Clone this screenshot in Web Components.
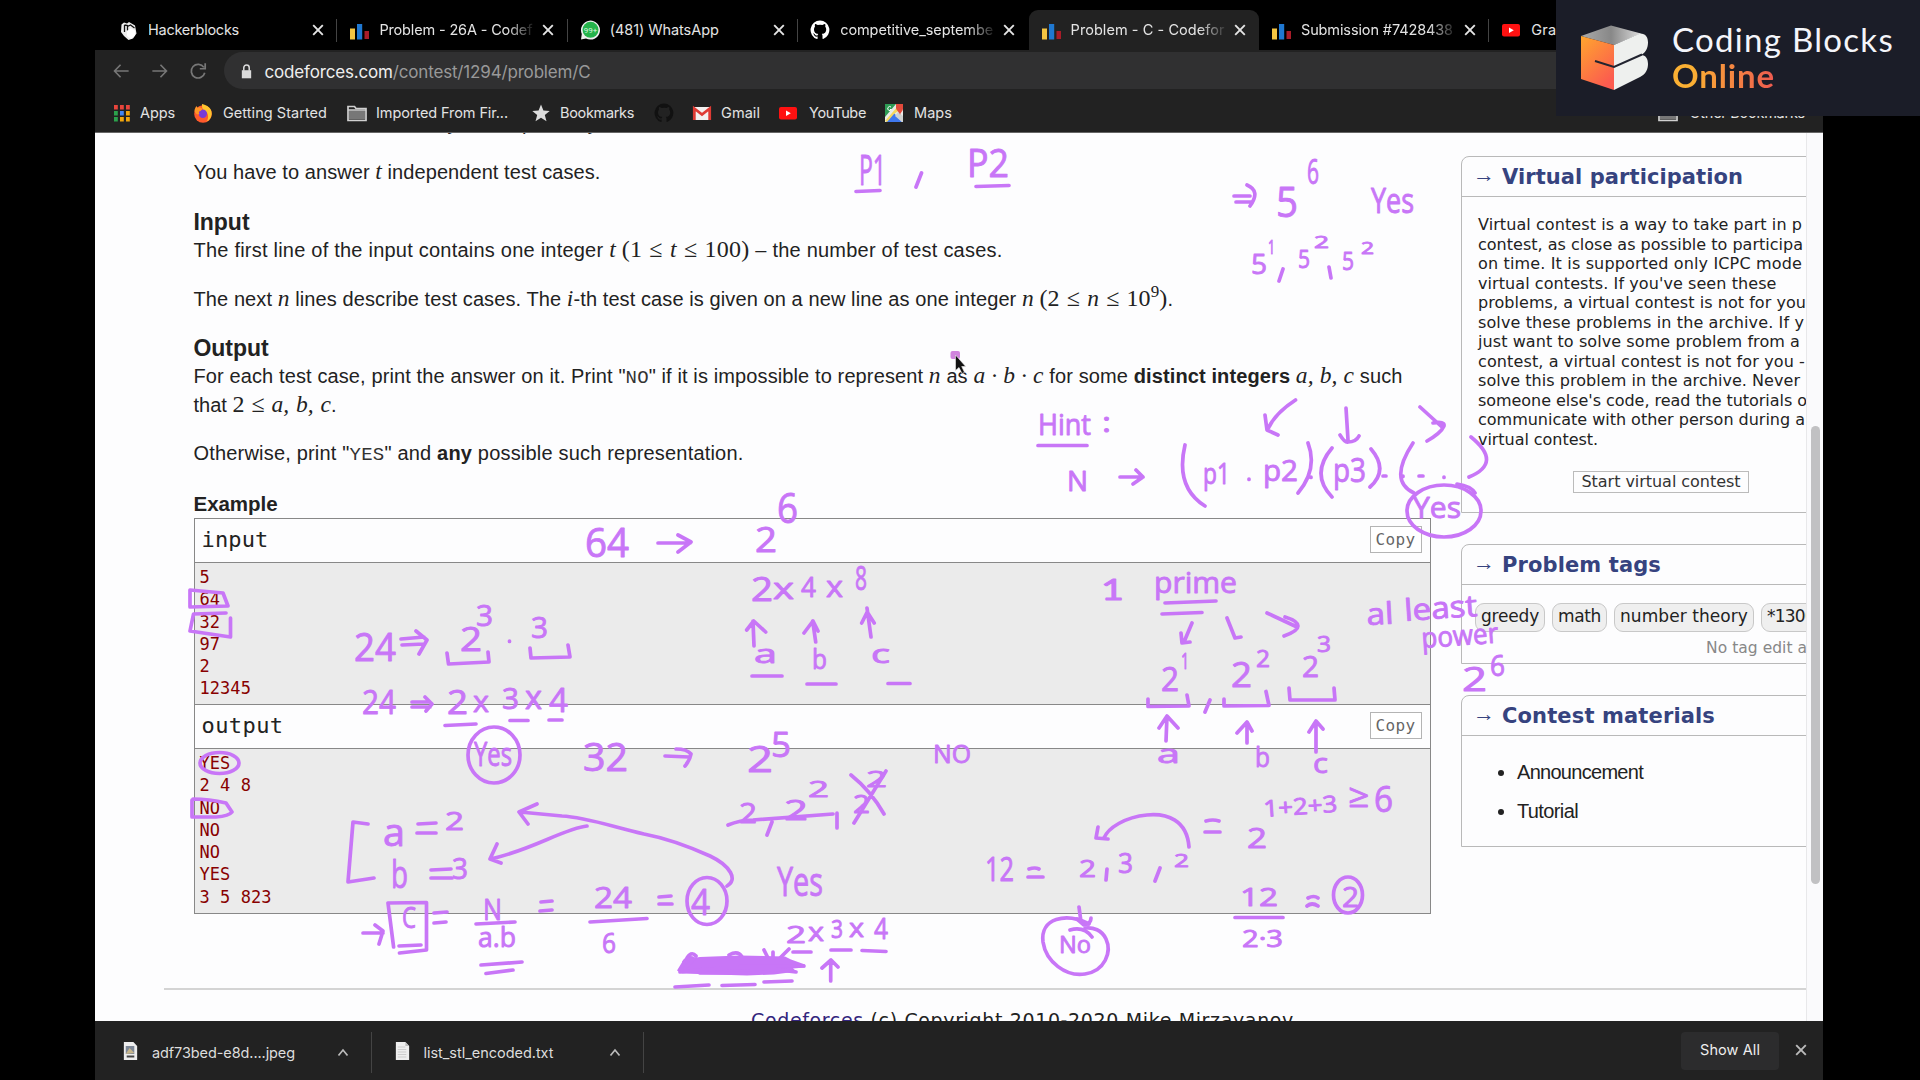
<!DOCTYPE html>
<html lang="en">
<head>
<meta charset="utf-8">
<title>Problem - C - Codeforces</title>
<style>
html,body{margin:0;background:#000;overflow:hidden}
body{width:1920px;height:1080px;font-family:"Liberation Sans",sans-serif}
</style>
</head>
<body>
<desktop-view></desktop-view>
<script>
const make=(name,css,html,after)=>customElements.define(name,class extends HTMLElement{
  constructor(){super();this.attachShadow({mode:'open'});}
  connectedCallback(){
    if(this.ready)return;this.ready=true;
    this.shadowRoot.innerHTML='<style>*{box-sizing:border-box}'+css+'</style>'+(typeof html==='function'?html(this):html);
    if(after)after(this);
  }
});

const bars='<path fill="#f4c542" d="M1 8.500h5v11H1z"/><path fill="#1f78d1" d="M8 4h5.200v15.500H8z"/><path fill="#a81c28" d="M15.500 11h4.500v8h-4.500z"/>';
const cat='<path d="M10 .5a9.500 9.500 0 0 0-3 18.500c.5.1.6-.2.6-.5v-2c-2.600.6-3.200-1-3.200-1-.5-1.200-1.100-1.500-1.100-1.500-.8-.6.1-.6.1-.6 1 .1 1.500 1 1.500 1 .8 1.400 2.200 1 2.800.8.1-.6.3-1 .6-1.300-2.200-.2-4.300-1-4.300-4.700 0-1 .4-1.900 1-2.500-.1-.3-.4-1.300.1-2.600 0 0 .8-.2 2.600 1a9 9 0 0 1 4.800 0c1.800-1.200 2.600-1 2.600-1 .5 1.300.2 2.300.1 2.600.6.6 1 1.500 1 2.500 0 3.700-2.200 4.500-4.400 4.700.4.3.7.9.7 1.800v2.700c0 .3.2.6.7.5A9.500 9.500 0 0 0 10 .5z" ';
const tube='<rect x="1" y="4" width="18" height="12.500" rx="2" fill="#f11"/><path d="M8 7.500v5.500l4.800-2.750z" fill="#fff"/>';
const folder='<path d="M1 3.500h6.500l1.500 2h10v12H1z" fill="none" stroke="#d0d0d0" stroke-width="1.700"/><path d="M2 7.500h16v9H2z" fill="#777"/><path d="M1 7h18" stroke="#d0d0d0" stroke-width="1.500"/>';
const icons={
 hack:'<path d="M2.500 4.500L5 2.500l3 1L10 2l6 3.500 1.500 8L14 18.500 9.500 20 5 16l-3-4z" fill="#eee"/><path d="M5.500 5v7M5.500 5l3 .5 0 5M8.500 6.500l3-1.500 4 3" stroke="#111" stroke-width="1.300" fill="none"/><path d="M8 11l4-2.500 4 2v5l-4 3.500-4-3z" fill="#fff"/>',
 cf:bars, github:cat+'fill="#fff"/>', githubdark:cat+'fill="#111"/>', yt:tube, folder,
 whatsapp:'<path d="M1 19.500L1.800 14A9.500 9.500 0 1 1 6 18.500z" fill="#eee"/><circle cx="10.500" cy="9.800" r="8" fill="#25b34b"/><text x="10.500" y="13" font-size="8" font-family="Roboto" text-anchor="middle" fill="#d9f7df">99+</text>',
 apps:[0,1,2].map(r=>[0,1,2].map(c=>`<rect x="${2+c*6}" y="${2+r*6}" width="3.800" height="4.500" fill="${[['#e8453c','#e8453c','#e8453c'],['#2ba24c','#4285f4','#f2a60c'],['#2ba24c','#f2a60c','#f2a60c']][r][c]}"/>`).join('')).join(''),
 firefox:'<circle cx="10" cy="11" r="8.800" fill="#ff5a2c"/><path d="M9 1c5 1 10 4 9.700 10-.5 4-2 6-5 7.500 2-3 2-8-1-10-3-1-4-4-3.700-7.500z" fill="#ffc42e"/><circle cx="9.800" cy="10.800" r="4.200" fill="#7a3bd6"/><path d="M1.500 8c0-2 1-4 2-5l1 2c2-1 4 0 5 1l-2 2c-2 0-2 2-1 3-2 1-4 0-5-3z" fill="#ff9526"/>',
 star:'<path d="M10 1.500l2.400 6 6.300.4-4.900 4.100 1.700 6.300-5.500-3.500-5.500 3.500 1.700-6.300-4.900-4.100 6.300-.4z" fill="#dcdcdc"/>',
 gmail:'<rect x="1" y="4" width="18" height="13" rx="1" fill="#f3f0ef"/><path d="M2.300 17V5.500l7.700 6 7.700-6V17" fill="none" stroke="#df3b34" stroke-width="2.800"/>',
 maps:'<rect x="1" y="1" width="18" height="18" fill="#e9ebe8"/><path d="M1 1h11L1 14z" fill="#2d9b54"/><path d="M2 19L10 10l8 9z" fill="#3f78ee"/><path d="M1 18L14 3l3 3L10 11l-7 8z" fill="#f6d85c"/><path d="M11 13l7 6h1v-6l-5-4z" fill="#cfd2d0"/><path d="M12 1h7v5c0 2-3 4-3 6 0-2-4-5-4-7z" fill="#e24a3b"/><path d="M7 4a2 2 0 1 0 .5 2.500H6" stroke="#fff" fill="none"/>',
 back:'<path d="M18.500 10H3M9.500 3L2.800 10l6.700 7" fill="none" stroke="#777" stroke-width="1.800"/>',
 fwd:'<path d="M1.500 10H17M10.500 3l6.700 7-6.700 7" fill="none" stroke="#777" stroke-width="1.800"/>',
 reload:'<path d="M16.500 6A7.600 7.600 0 1 0 17.500 12M18 1.500v6h-6" fill="none" stroke="#777" stroke-width="1.900"/>',
 lock:'<path d="M4.500 8.500h11v9.500h-11z" fill="#dadada"/><path d="M6.800 9V5.500a3.200 3.200 0 0 1 6.400 0V9" fill="none" stroke="#dadada" stroke-width="1.800"/>',
 close:'<path d="M5.200 5.200l9.600 9.600M14.800 5.200l-9.600 9.600" stroke="currentColor" stroke-width="1.900"/>',
 caret:'<path d="M5.500 12.500L10 7l4.500 5.500" fill="none" stroke="#bbb" stroke-width="1.700"/>',
 jpeg:'<path d="M3 1h10l4 4v14H3z" fill="#eee"/><rect x="5" y="5" width="9" height="8" fill="#7d8796"/><path d="M5 13l4-6 5 5z" fill="#c7b68c"/><path d="M6 15.500h8" stroke="#444" stroke-width="2"/>',
 txt:'<path d="M3 1h10l4 4v14H3z" fill="#eee"/><path d="M5 6h8M5 8.500h9M5 11h9M5 13.500h9M5 16h9" stroke="#ccc"/><path d="M13 1v4h4" fill="#bbb"/>'
};
make('ui-icon',':host{display:block;flex:none;width:20px;height:20px}svg{display:block;width:100%;height:100%}',
 e=>`<svg viewBox="0 0 20 20" preserveAspectRatio="none">${icons[e.getAttribute('name')]}</svg>`);

make('browser-tab',`:host{display:flex;flex:none;width:230.4px;height:40px;align-items:center;padding:0 8px 0 12px;position:relative;color:#e4e4e4;border-radius:9px 9px 0 0}
 :host([active]){background:#222}
 :host([line])::after{content:"";position:absolute;right:0;top:9px;height:23px;width:1px;background:#444}
 .t{flex:none;width:155px;margin-left:10px;overflow:hidden;white-space:nowrap;position:relative;top:-1px}
 :host([fade]) .t{-webkit-mask:linear-gradient(90deg,#000 128px,transparent 157px)}
 .x{margin-left:4px;width:20px;height:20px}`,
 e=>`<ui-icon name="${e.getAttribute('icon')}"></ui-icon><div class="t"><slot></slot></div><ui-icon class="x" name="close"></ui-icon>`);

make('book-mark',':host{display:flex;flex:none;align-items:center;color:#e2e2e2}ui-icon{margin-right:var(--g,10px)}',
 e=>`<ui-icon name="${e.getAttribute('icon')}"></ui-icon><slot></slot>`);

make('brand-card',`:host{position:absolute;left:1556px;top:0;width:364px;height:116px;background:#1b1d28;display:flex;padding:25px 0 0 24px;color:#f4f5fa;font:33px/36px Lato,sans-serif;z-index:3}
 svg{flex:none;width:69px;height:66px}.w{margin:-4px 0 0 23px;display:flex;flex-direction:column}
 b{font-weight:700;background:linear-gradient(90deg,#fbb033 0,#fbb033 20px,#ee5a50 103px);-webkit-background-clip:text;color:transparent;width:110px}`,
 `<svg viewBox="0 0 69 66"><defs><linearGradient id="o" x1="0" y1="0" x2=".6" y2="1"><stop offset="0" stop-color="#ffa62e"/><stop offset="1" stop-color="#fb5b4f"/></linearGradient><linearGradient id="g"><stop offset="0" stop-color="#aaa"/><stop offset=".5" stop-color="#888"/><stop offset="1" stop-color="#ddd"/></linearGradient></defs>
 <path d="M1 11L31 .5l30 8L34 20z" fill="url(#g)"/><path d="M1 11l33 9v45L1 54z" fill="url(#o)"/><path d="M34 20L60 8.500c6 0 8 4 8 9s-2 10-7 12.500c5 0 7 4 7 9s-2 10-8 13L34 65z" fill="#eef0ee"/><path d="M15 36l19 6 28-12.500" fill="none" stroke="#222430" stroke-width="2"/></svg>
 <div class="w"><fit-text w="222">Coding Blocks</fit-text><b><fit-text w="103">Online</fit-text></b></div>`);

make('chrome-top',`:host{display:block;flex:none;height:133px;font:14.500px Inter,sans-serif}
 .tabs{height:50px;padding:10px 0 0 12px;display:flex;overflow:hidden}
 .bar{height:39px;background:#222;display:flex;align-items:center;padding-left:17px}
 .bar>ui-icon{width:18px;height:18px;margin:3px 20.500px 0 0}
 .url{flex:1;height:37px;margin-top:2px;background:#303031;border-radius:19px 0 0 19px;display:flex;align-items:center;padding:2px 0 0 14px;color:#999;font-size:17px}
 .url ui-icon{width:17px;height:17px;margin-right:9.500px}.url i{font-style:normal;color:#eee}
 .marks{height:44px;background:#222;border-bottom:1px solid #666;display:flex;align-items:center;padding:4px 18px 0 17px}
 .marks book-mark:last-child{margin:20px 0 0 auto}`,
 `<div class="tabs">
 <browser-tab icon="hack" line><fit-text w="91" style="margin-left:-1px">Hackerblocks</fit-text></browser-tab>
 <browser-tab icon="cf" line fade><fit-text w="153">Problem - 26A - Codef</fit-text></browser-tab>
 <browser-tab icon="whatsapp" line><fit-text w="109">(481) WhatsApp</fit-text></browser-tab>
 <browser-tab icon="github" fade><fit-text w="153">competitive_septembe</fit-text></browser-tab>
 <browser-tab icon="cf" active fade><fit-text w="154">Problem - C - Codefor</fit-text></browser-tab>
 <browser-tab icon="cf" line fade><fit-text w="152">Submission #7428438</fit-text></browser-tab>
 <browser-tab icon="yt"><fit-text w="25">Gra</fit-text></browser-tab></div>
 <div class="bar"><ui-icon name="back"></ui-icon><ui-icon name="fwd"></ui-icon><ui-icon name="reload" style="margin-right:17px"></ui-icon>
 <div class="url"><ui-icon name="lock"></ui-icon><fit-text w="326"><i>codeforces.com</i>/contest/1294/problem/C</fit-text></div></div>
 <div class="marks">
 <book-mark icon="apps" style="--g:8px"><fit-text w="35">Apps</fit-text></book-mark>
 <book-mark icon="firefox" style="margin-left:18px"><fit-text w="104">Getting Started</fit-text></book-mark>
 <book-mark icon="folder" style="margin-left:20px;--g:9px"><fit-text w="132">Imported From Fir...</fit-text></book-mark>
 <book-mark icon="star" style="margin-left:23px;--g:9px"><fit-text w="74">Bookmarks</fit-text></book-mark>
 <book-mark icon="githubdark" style="margin-left:20px;--g:18px"></book-mark>
 <book-mark icon="gmail" style="--g:9px"><fit-text w="39">Gmail</fit-text></book-mark>
 <book-mark icon="yt" style="margin-left:18px;--g:11px"><fit-text w="57">YouTube</fit-text></book-mark>
 <book-mark icon="maps" style="margin-left:18px;--g:10px"><fit-text w="38">Maps</fit-text></book-mark>
 <book-mark icon="folder" style="--g:12px;margin-top:0"><fit-text w="115.500">Other Bookmarks</fit-text></book-mark></div>`);

make('sample-block',`:host{display:block;border:solid #888;border-width:1px 1px 0 1px;font-family:"DejaVu Sans Mono",monospace}
 :host([last]){border-bottom-width:1px}
 header{height:43px;display:flex;justify-content:space-between;align-items:center;padding:0 8px;font-size:22px;color:#222}
 header span.b{border:1px solid #b4b4b4;background:#fff;width:52px;height:27px;font-size:16px;line-height:25px;text-align:center;color:#666;margin-bottom:2px}
 header>:first-child{margin:-1px 0 0 -1px}
 pre{margin:0;border-top:1px solid #888;background:#ebebeb;color:#880000;font:17px/22.250px "DejaVu Sans Mono",monospace;height:var(--h);padding:3px 0 0 5px;letter-spacing:.05px}`,
 e=>`<header><fit-text w="${e.getAttribute('tw')}">${e.getAttribute('label')}</fit-text><span class="b"><fit-text w="40">Copy</fit-text></span></header><pre>${e.textContent}</pre>`);

make('problem-text',`:host{display:block;flex:none;width:1237px;margin-left:98.500px;font:20px/28px "Liberation Sans",sans-serif;color:#222}
 p,h3,h4{margin:0;height:28px;white-space:nowrap}h3{font-size:23px}h4{font-size:20.500px}
 m{font:italic 23.500px/0 "Liberation Serif",serif}n{font:24px/0 "Liberation Serif",serif;word-spacing:1px}sup{font-size:17px;line-height:0}
 tt{font:19px/0 "Liberation Mono",monospace;color:#333}`,
 `<p style="margin-top:-24px"><fit-text w="408">If there are several answers, you can print any.</fit-text></p>
 <p style="margin-top:21px"><fit-text w="407">You have to answer <m>t</m> independent test cases.</fit-text></p>
 <h3 style="margin-top:22px"><fit-text w="56">Input</fit-text></h3>
 <p style="margin-top:0"><fit-text w="809">The first line of the input contains one integer <m>t</m> <n>(1 ≤ <m>t</m> ≤ 100)</n> – the number of test cases.</fit-text></p>
 <p style="margin-top:21px"><fit-text w="979.500">The next <m>n</m> lines describe test cases. The <m>i</m>-th test case is given on a new line as one integer <m>n</m> <n>(2 ≤ <m>n</m> ≤ 10<sup>9</sup>)</n>.</fit-text></p>
 <h3 style="margin-top:21px"><fit-text w="75">Output</fit-text></h3>
 <p style="margin-top:0"><fit-text w="1209">For each test case, print the answer on it. Print "<tt>NO</tt>" if it is impossible to represent <m>n</m> as <m>a · b · c</m> for some <b>distinct integers</b> <m>a, b, c</m> such</fit-text></p>
 <p style="margin-top:.5px"><fit-text w="143">that <n>2 ≤ <m>a, b, c</m></n>.</fit-text></p>
 <p style="margin-top:20px"><fit-text w="550">Otherwise, print "<tt>YES</tt>" and <b>any</b> possible such representation.</fit-text></p>
 <h4 style="margin-top:23px"><fit-text w="84">Example</fit-text></h4>
 <sample-block label="input" tw="67" style="--h:142px;margin-top:.5px">5
64
32
97
2
12345</sample-block><sample-block last label="output" tw="82" style="--h:165px">YES
2 4 8
NO
NO
NO
YES
3 5 823</sample-block>`);

make('side-panel',`:host{display:block;width:400px;border:1px solid #b9b9b9;border-radius:8px 8px 0 0;margin-bottom:31px;font-family:"DejaVu Sans",sans-serif}
 header{height:40px;border-bottom:1px solid #b9b9b9;display:flex;align-items:center;padding-left:11px;color:#36437f;font-size:21px;font-weight:700}
 i{font:22px/20px "Liberation Serif",serif;width:29px;margin-top:-3px}`,
 e=>`<header><i>→</i><fit-text w="${e.getAttribute('w')}">${e.getAttribute('label')}</fit-text></header><slot></slot>`);

const vp=[[324,"Virtual contest is a way to take part in p"],[325,"contest, as close as possible to participa"],[324,"on time. It is supported only ICPC mode"],[298.5,"virtual contests. If you've seen these"],[328,"problems, a virtual contest is not for you"],[326,"solve these problems in the archive. If y"],[322,"just want to solve some problem from a"],[327,"contest, a virtual contest is not for you -"],[322,"solve this problem in the archive. Never"],[329,"someone else's code, read the tutorials o"],[327,"communicate with other person during a"],[120,"virtual contest."]];
make('side-bar',`:host{display:block;flex:none;width:400px;margin:23px 0 0 30.500px}
 .vp{padding:18px 0 0 16px;font-size:16px;line-height:19.500px;color:#222}.vp div{height:19.500px}
 .btn{width:176px;height:22px;margin:22px 0 0 111px;border:1px solid #bbb;font-size:16px;line-height:20px;text-align:center;color:#333}
 .tags{display:flex;gap:7px;padding:18px 0 0 13px}.tags span{flex:none;height:29px;border:1.500px solid #c8c8c8;border-radius:9px;background:#efefef;padding:0 5px;font-size:17px;line-height:25px;color:#222}
 .no{margin:6px 0 0 244px;font-size:15.500px;line-height:20px;color:#888;white-space:nowrap}
 ul{margin:0;padding:17px 0 0 55px;font:20px/39px "Liberation Sans",sans-serif;color:#222}`,
 `<side-panel w="241" label="Virtual participation" style="height:357px"><div class="vp">${vp.map(l=>`<div><fit-text w="${l[0]}">${l[1]}</fit-text></div>`).join('')}</div><div class="btn"><fit-text w="159">Start virtual contest</fit-text></div></side-panel>
 <side-panel w="159" label="Problem tags" style="height:120px"><div class="tags"><span><fit-text w="58">greedy</fit-text></span><span><fit-text w="43">math</fit-text></span><span><fit-text w="128">number theory</fit-text></span><span><fit-text w="48">*1300</fit-text></span></div><div class="no"><fit-text w="144">No tag edit access</fit-text></div></side-panel>
 <side-panel w="213" label="Contest materials" style="height:152px"><ul><li><fit-text w="126">Announcement</fit-text></li><li><fit-text w="61">Tutorial</fit-text></li></ul></side-panel>`);

make('web-page',`:host{display:flex;flex:none;height:888px;background:#fdfdfe;overflow:hidden}
 .v{width:1711px;overflow:hidden;flex:none}.m{display:flex;height:855px}
 footer{margin-left:69px;border-top:2px solid #d4d4d4;padding:18px 0 0 587px;font:19px/24px "DejaVu Sans",sans-serif;color:#222}u{text-decoration:none;color:#33257d}
 .s{flex:1;border-left:1px solid #e8e8ea;background:#fafafc;padding:293px 3.500px 0 4px}.s div{height:458px;border-radius:5px;background:#c1c1c3}`,
 `<div class="v"><div class="m"><problem-text></problem-text><side-bar></side-bar></div><footer><fit-text w="543"><u>Codeforces</u> (c) Copyright 2010-2020 Mike Mirzayanov</fit-text></footer></div><div class="s"><div></div></div>`);

make('download-item',`:host{display:flex;flex:none;width:272.500px;height:41px;align-items:center;border-right:1px solid #444;padding:0 18px 0 22px}
 .f{width:19px;height:20px;margin:-4px 12px 0 0}.c{margin-left:auto}`,
 e=>`<ui-icon class="f" name="${e.getAttribute('icon')}"></ui-icon><slot></slot><ui-icon class="c" name="caret"></ui-icon>`);
make('download-bar',`:host{display:flex;flex:none;height:59px;background:#222;padding:11px 12px 0 4px;color:#ddd;font:14.500px Inter,sans-serif}
 download-item+download-item{padding-left:21px}
 .a{margin-left:auto;width:98px;height:38px;background:#2c2c2d;border-radius:4px;text-align:center;line-height:35px;color:#eee}
 .x{margin:8px 0 0 12px;color:#bbb}`,
 `<download-item icon="jpeg"><fit-text w="143">adf73bed-e8d....jpeg</fit-text></download-item><download-item icon="txt"><fit-text w="130">list_stl_encoded.txt</fit-text></download-item>
 <div class="a"><fit-text w="60">Show All</fit-text></div><ui-icon class="x" name="close"></ui-icon>`);

/* Pen annotations: [text, x, width, baseline, size, rotation] */
const notes=[["P1",859,27,185,42],["P2",967,42,177,38],["5",1276,22,217,42],["6",1307,12,184,34],["Yes",1371,43,213,34],
["5",1251,16,274,28],["1",1268,7,254,20],["5",1298,12,268,25],["2",1314,15,248,16],["5",1342,12,270,26],["2",1361,13,254,16],
["Hint",1038,53,435,30],[":",1102,9,432,28],["N",1067,21,491,28],["p1",1203,27,484,30],["p2",1263,35,481,30],["p3",1333,33,482,32],
["Yes",1413,48,518,30],["6",777,21,523,42],["64",585,44,557,40],["2",755,22,552,35],["2",751,22,601,32],["x",773,21,599,30],["4",801,15,597,28],["x",826,17,597,30],["8",855,12,590,33],
["a",754,23,663,26],["b",812,15,669,28],["c",871,19,663,26],
["24",354,42,661,38],["2",460,22,651,32],["3",476,17,626,30],["3",531,17,638,30],["24",362,34,714,33],["2",447,21,714,32],["x",473,16,712,30],["3",502,17,709,29],["x",525,17,709,32],["4",549,19,712,32],
["Yes",474,38,766,32],["32",583,45,771,38],["2",747,26,772,36],["5",771,20,757,35],["NO",933,38,763,26],
["2",739,18,823,28],["2",784,24,820,28],["2",808,21,797,22],["2",853,17,813,26],["2",866,21,787,21],["Yes",777,46,896,40],
["a",383,22,846,38],["2",445,19,830,26],["b",391,17,888,38],["3",452,16,879,29],["C",402,14,928,29],["N",483,19,920,30],["a.b",478,38,947,27],
["24",594,38,908,29],["6",602,14,953,28],["4",691,19,915,36],["2",786,20,943,23],["x",808,16,941,26],["3",831,12,938,25],["x",849,15,937,26],["4",874,14,939,30],
["prime",1154,83,593,29],["2",1161,18,691,32],["1",1181,8,669,21],["2",1231,21,687,34],["2",1256,14,667,23],["2",1302,17,677,29],["3",1317,14,652,21],
["a",1157,23,763,26],["b",1255,15,767,28],["c",1313,15,773,27],["al",1367,27,625,30,-3],["least",1405,73,621,30,-4],["power",1422,77,648,28,-4],["2",1462,25,691,32],["6",1490,15,676,29],
["2",1247,20,848,28],["1+2+3",1264,74,817,23,-4],["≥",1348,21,807,32],["6",1374,19,812,37],
["12",985,29,881,32],["2",1079,17,877,23],["3",1118,15,873,27],["2",1174,15,867,18],["12",1240,38,906,25],["2·3",1242,41,947,24],["2",1342,17,907,27],["No",1059,32,953,24]];
const strokes=`M856 191.500l24-1M976 186.500l33-1M921.500 173l-5.500 14M1234 196h16M1236 202h15M1247 185q14 6 3 21M1283 269l-4 12M1329 267l2 11
M1295.500 400q-20 13-27 28M1265 415l2 15 11 5M1346 408l2 32M1340 435q5 8 8 7 8 0 11-6M1420 407l22 20M1433 423q12-2 11 3-3 7-17 15M1038 445.500h49M1120 477h23M1136 470l7 7-10 7
M1185 445q-10 42 20 61M1249 479v.5M1308 443q10 26-10 50M1311 477v.5M1332 448q-22 26 0 49M1371 449q18 21-1 38M1383 476h3M1413 443q-25 38 1 50M1403 476v.5M1419 476h4M1444 477v.5M1471 437q32 26-2 40M1457 484q14 2 18 9
M658 543h32M678 535l13 7-13 10M754 646l-1-25M746.700 630l7-9 12 11M815.700 642l-3-21M804 633l9-12 5 10M871 637l-4-29M861.700 623l5.500-11 7 11M752 676h30M807 684h29M888 683.500h22
M401 639l23-2M402 645l22-1M416 631l11 9-8 14M509.500 641v.5M447 653l1.500 11 40.500-2-1-10M530 648l1 10 39-1-2-12M412 702h18M412 707h18M425 697l7 7-6 7M445 725.500l31-1.500M510 720.500h18M549 720h13
M665 756l24 1M676 749q11 0 15 5-1 6-6 12M772 822l-5 13M728 825q12-5 25-5l80-6M837 813v15M851 775q20 16 33 39M886 771l-32 52
M192 800v17h24q13-1 16-5l-6-9q-17-4-33-4M190 590v17l38-1-5-13zM226 613l-32.500 1-3.500 17 40.500 6v-19M368 824l-15-2-5 60 26-4
M418 824l18-1M417 833h19M431 870l20-1M431 878h21M727 886C738 880 731 866 710 856C690 847 665 838 644 834C610 826 585 817 562 816L520 812M537 804l-18 8 9 12M587 826C565 828 530 851 490 859M497 844l-7 15 11 4
M363 933h20M375 925l8 6-4 13M393.600 947L388 903l38.500-.5V950l-27 3M399 946l22-1M434 913l13-1M434 923l12-1M476 924l39-2M481 965l41-3M486 973.500l27-3.500M541 902l11-1M540 911l12-1M590 922l57-3.500M659 897l12-1M659 904h13
M793 952h18M831 950h20M862 950.500l24 1M830.700 981v-21M822 968l9-8 7 7M675 987l34-2M722 985.500l33-1M764 982l28-1M686 960q5-10 10-4M729 955q9-5 13 2M764 950l4 8M789 949l-9 9M773 952v8
M1165 603l51-2M1162 614l40-1.500M1192 623l-8 19M1181 633l1 10 8-1M1227 618l8 20 6-1M1267 613l30 14M1285 617q13 4 13 9 0 5-14 10
M1148 699v7.500l41-.5-2-11M1210 700l-5 12M1224 699v7l45-.5-3-14M1289 688l1 12h45l-1-12M1166 741l1-25M1159 728l8-12 11 12M1247 743v-21M1237 733l10-11 5 9M1316 752v-31M1309 732l7-11 7 8
M1206 821q7-2 13 0M1205 832h15M1189 847C1187 820 1167 813 1147 815C1125 817 1108 828 1104 838M1098 827l-2 11 12 1M1029 869q6-2 10 0M1028 877h15M1107 869l-1 11M1160 868l-5 13M1235 917.500h48M1308 898q6-3 10 0M1307 906q5-4 11 0M1079 907l2 15M1077 919l7 6q7-1 7-7M1070 930q14-4 22 7`;
make('ink-layer',`:host{position:absolute;inset:0;z-index:2;pointer-events:none}svg{display:block}
 text{font-family:"Open Sans","Noto Sans",sans-serif;fill:#c876f7;stroke:#c876f7;stroke-width:.9;stroke-linejoin:round}
 .s{fill:none;stroke:#c876f7;stroke-width:3.700;stroke-linecap:round;stroke-linejoin:round}`,
 ()=>`<svg width="1920" height="1080"><path class="s" d="${strokes}"/>
 <g class="s"><ellipse cx="1444" cy="511" rx="37" ry="26"/><ellipse cx="494" cy="755" rx="26" ry="28"/><ellipse cx="219.500" cy="763" rx="19.500" ry="10.500"/><ellipse cx="707" cy="901" rx="20" ry="23.500"/><ellipse cx="1348" cy="895" rx="14.500" ry="18"/><path d="M1089 924C1066 912 1040 918 1043 942C1046 962 1066 977 1085 974C1105 971 1112 952 1106 939C1102 930 1093 927 1085 928"/></g>
 <path d="M684 959l16-2 40-1.500 45 1 6 3 14 5v3l-12 1 4 3-23 3-27 1-65-2-5-3z" fill="#c876f7"/><path class="s" d="M680 972q60-8 116 0M684 962q5-6 10-3l-9 9M740 966h64M700 973h58"/>
 ${notes.map(([s,x,w,y,f,r])=>`<text x="${x}" y="${y}" font-size="${f}" textLength="${w}" lengthAdjust="spacingAndGlyphs"${r?` transform="rotate(${r} ${x} ${y})"`:''}>${s}</text>`).join('')}
 <text x="1101" y="600" font-size="29" textLength="23" lengthAdjust="spacingAndGlyphs" style="font-family:Lato">1</text>
 <rect x="950.500" y="351" width="9.500" height="8" rx="2" fill="#d084dd"/><path d="M955.500 355v15.500l3.500-3 3 6 2.500-1.200-2.800-5.800h4z" fill="#111" stroke="#eee" stroke-width=".6"/></svg>`);

make('desktop-view',`:host{display:flex;position:relative;width:1920px;height:1080px;background:#000;overflow:hidden}
 main{display:flex;flex-direction:column;width:1728px;margin-left:95px}`,
 `<main><chrome-top></chrome-top><web-page></web-page><download-bar></download-bar></main><ink-layer></ink-layer><brand-card></brand-card>`);

/* Spreads its content over a given width by adjusting the letter spacing. */
make('fit-text',':host{display:inline-block;white-space:nowrap}','<slot></slot>',e=>{
  const w=+e.getAttribute('w'),n=e.textContent.length,now=e.getBoundingClientRect().width;
  if(w&&n)e.style.letterSpacing=((w-now)/n)+'px';
});
</script>
</body>
</html>
